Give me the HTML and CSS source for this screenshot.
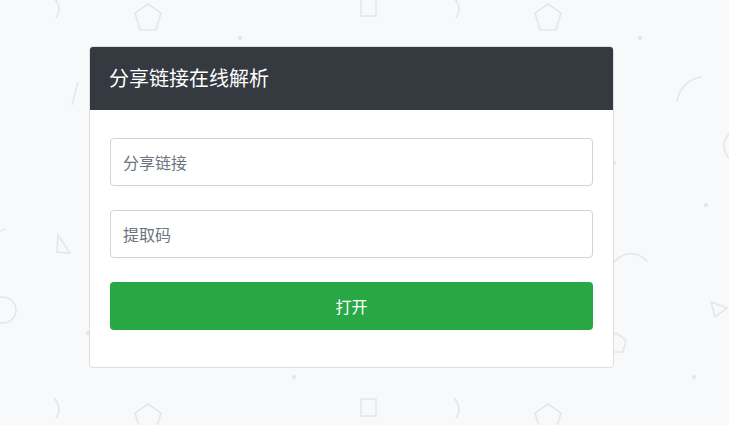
FILE: index.html
```html
<!DOCTYPE html>
<html lang="zh-CN">
<head>
<meta charset="utf-8">
<title>分享链接在线解析</title>
<link rel="stylesheet" href="styles.css">
</head>
<body>
<svg class="bg" width="729" height="425" viewBox="0 0 729 425" aria-hidden="true">
  <g class="shape">
    <path d="M54 -2 Q63 8 56 18"/>
    <path d="M454 -2 Q463 8 456 18"/>
    <path d="M54 398 Q63 408 56 418"/>
    <path d="M454 398 Q463 408 456 418"/>
    <polygon points="148,4 161,13 156,30 140,30 135,13"/>
    <polygon points="548,4 561,13 556,30 540,30 535,13"/>
    <polygon points="148,404 161,413 156,430 140,430 135,413"/>
    <polygon points="548,404 561,413 556,430 540,430 535,413"/>
    <rect x="361" y="-1" width="15" height="17"/>
    <rect x="361" y="399" width="15" height="17"/>
    <line x1="78" y1="82" x2="72" y2="105"/>
    <path d="M677 102 A28 28 0 0 1 702 77"/>
    <circle cx="741" cy="146" r="17"/>
    <polygon points="58,235 70,253 57,252"/>
    <circle cx="3" cy="310" r="13"/>
    <path d="M612 264 Q630 244 648 262"/>
    <polygon points="711,302 727,308 715,317"/>
    <polygon points="616,333 626,340 623,352 609,352 606,340"/>
    <line x1="0" y1="231" x2="6" y2="229"/>
  </g>
  <g class="dot">
    <circle cx="240" cy="38" r="2"/>
    <circle cx="640" cy="38" r="2"/>
    <circle cx="294" cy="377" r="2"/>
    <circle cx="694" cy="377" r="2"/>
    <circle cx="706" cy="205" r="2"/>
    <circle cx="88" cy="333" r="2"/>
    <circle cx="614" cy="163" r="2"/>
  </g>
</svg>
<main class="wrap">
  <section class="card">
    <header class="card-header">分享链接在线解析</header>
    <form class="card-body">
      <input class="field" type="text" placeholder="分享链接">
      <input class="field" type="text" placeholder="提取码">
      <button class="btn" type="button">打开</button>
    </form>
  </section>
</main>
</body>
</html>
```
FILE: styles.css
```css
html, body {
  margin: 0;
  padding: 0;
}
body {
  background: #f8f9fa;
  font-family: "Noto Sans CJK SC", "Noto Sans", "Liberation Sans", sans-serif;
  width: 729px;
  height: 425px;
  overflow: hidden;
  position: relative;
}
.bg {
  position: absolute;
  left: 0;
  top: 0;
  z-index: 0;
}
.shape {
  fill: none;
  stroke: #e4e6e9;
  stroke-width: 1.6;
}
.dot {
  fill: #e2e4e7;
}
.wrap {
  position: relative;
  z-index: 1;
  padding: 46px 0 0 89px;
}
.card {
  width: 523px;
  border: 1px solid #dcdee0;
  border-radius: 4px;
  background: #fff;
  overflow: hidden;
}
.card-header {
  background: #343a40;
  color: #fff;
  font-size: 20px;
  line-height: 28px;
  height: 63px;
  box-sizing: border-box;
  padding: 17px 19px 0;
}
.card-body {
  display: flex;
  flex-direction: column;
  gap: 24px;
  padding: 28px 20px 37px;
  margin: 0;
}
.field {
  height: 48px;
  box-sizing: border-box;
  border: 1px solid #ced4da;
  border-radius: 4px;
  padding: 0 12px;
  font-family: inherit;
  font-size: 16px;
  color: #495057;
  background: #fff;
  outline: none;
}
.field::placeholder {
  color: #6c757d;
  opacity: 1;
}
.btn {
  height: 48px;
  border: 0;
  border-radius: 4px;
  background: #28a745;
  color: #fff;
  font-family: inherit;
  font-size: 16px;
}
```
